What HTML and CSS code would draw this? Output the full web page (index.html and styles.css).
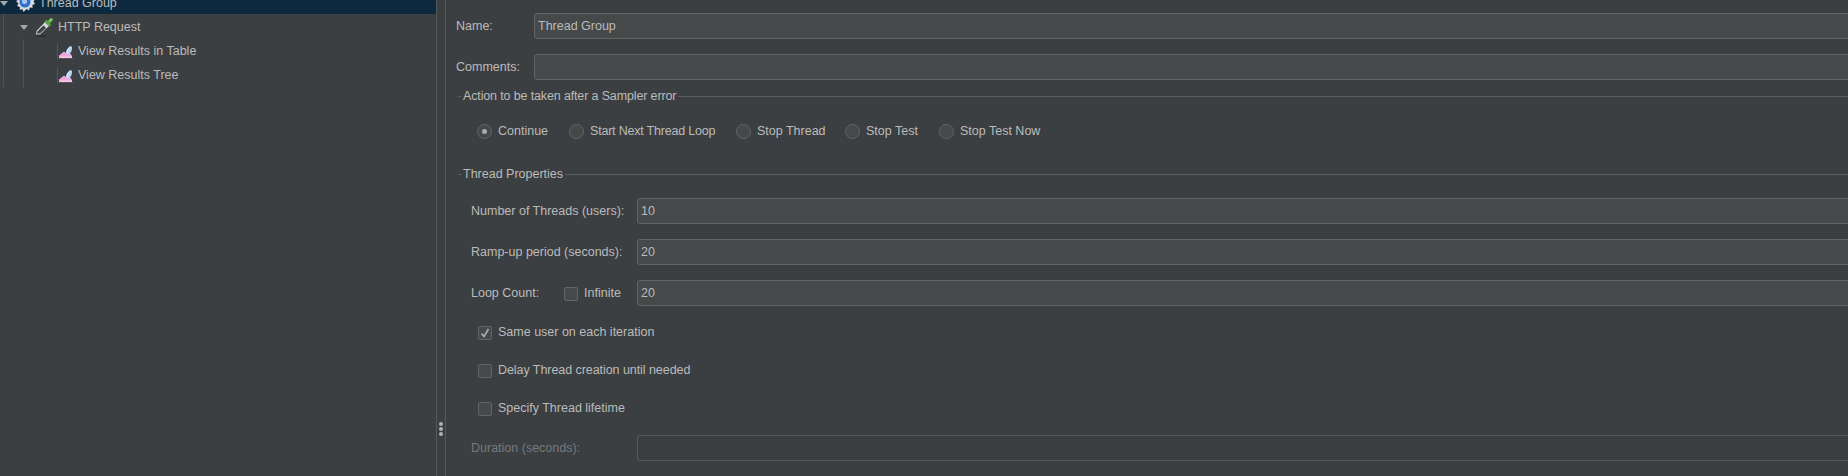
FILE: index.html
```html
<!DOCTYPE html>
<html lang="en">
<head>
<meta charset="utf-8">
<title>Thread Group</title>
<link rel="stylesheet" href="styles.css">
</head>
<body>
<svg class="defs" width="0" height="0">
  <symbol id="listener" viewBox="0 0 18 18">
    <path d="M1.500 1v14.500H17" fill="none" stroke="#5f6163" stroke-width="1" stroke-dasharray="1.500 .7"/>
    <path d="M3 15V12.500L8 8.500l3 2.500 3-1 2 3v2z" fill="#f0a6dc"/>
    <path d="M3 15h13v-1.500H5z" fill="#f7c9ea"/>
    <path d="M10 11c-.5-2.500 1-6 4.500-8 1 0 1.500 1 1.500 2.500 0 2.500-1.500 5-3.500 6z" fill="#b9d3f2"/>
    <path d="M11 10.500c0-2 1-5 3.500-6.500" fill="none" stroke="#e6f0fb" stroke-width="1"/>
  </symbol>
</svg>
<div class="app">
  <aside class="tree">
    <div class="node selected">
      <span class="arrow arrow-root"></span>
      <svg class="gear" viewBox="0 0 20 20" width="20" height="20">
        <path d="M10 0l1.500 2.500 2.500-1.500.8 2.800 2.900-.4-.4 2.900 2.800.8-1.500 2.400 1.400 2.500-2.700 1 .4 2.800-2.900-.2-.8 2.800-2.500-1.500L8.500 20l-1-2.800-2.800.6.2-2.900-2.800-.8 1.300-2.500L1 9l2.500-1.200-.4-2.900 2.900.2.800-2.800 2.300 1.500z" fill="#d9dadb"/>
        <circle cx="10" cy="10" r="5.500" fill="#2f6fd0"/>
        <circle cx="9.500" cy="9.500" r="2.500" fill="#a9c8f0"/>
      </svg>
      <span class="node-text">Thread Group</span>
    </div>
    <div class="node level-1">
      <span class="arrow"></span>
      <svg class="pipette" viewBox="0 0 20 20" width="20" height="20">
        <ellipse cx="7" cy="19" rx="6" ry="1" fill="#2e3032"/>
        <path d="M2 17.500l.5-3.500L11 5l4 4-9 8.500z" fill="#d3d6d8"/>
        <path d="M3 16.500l.5-2 6-6 2.500 2.500-6 5.500z" fill="#3f4345"/>
        <path d="M10.500 4.500l5 5 1.500-1.500-1-1.500 2.500-2.500c1.500-2-.5-4-2.500-2.500L13.500 4 12 3z" fill="#58a83e"/>
        <path d="M15 3.500l2-2 1 1-2 2z" fill="#9ad37e"/>
      </svg>
      <span class="node-text">HTTP Request</span>
    </div>
    <div class="node level-2">
      <svg class="listener" width="18" height="18"><use href="#listener"/></svg>
      <span class="node-text">View Results in Table</span>
    </div>
    <div class="node level-2">
      <svg class="listener" width="18" height="18"><use href="#listener"/></svg>
      <span class="node-text">View Results Tree</span>
    </div>
    <span class="guide guide-root"></span>
    <span class="guide guide-child"></span>
  </aside>
  <div class="splitter">
    <span class="dot"></span><span class="dot"></span><span class="dot"></span>
  </div>
  <main class="form">
    <div class="row head-first">
      <label class="head-label">Name:</label>
      <div class="field">Thread Group</div>
    </div>
    <div class="row row-next">
      <label class="head-label">Comments:</label>
      <div class="field"></div>
    </div>

    <div class="legend legend-action"><span class="legend-dash"></span><span>Action to be taken after a Sampler error</span><span class="legend-line"></span></div>
    <div class="radios">
      <div class="radio-item item-continue"><span class="radio on"></span><span>Continue</span></div>
      <div class="radio-item item-next"><span class="radio"></span><span class="tight">Start Next Thread Loop</span></div>
      <div class="radio-item item-thread"><span class="radio"></span><span>Stop Thread</span></div>
      <div class="radio-item item-test"><span class="radio"></span><span>Stop Test</span></div>
      <div class="radio-item"><span class="radio"></span><span>Stop Test Now</span></div>
    </div>

    <div class="legend legend-props"><span class="legend-dash"></span><span>Thread Properties</span><span class="legend-line"></span></div>
    <div class="props">
      <div class="row">
        <label class="prop-label">Number of Threads (users):</label>
        <div class="field">10</div>
      </div>
      <div class="row row-next">
        <label class="prop-label">Ramp-up period (seconds):</label>
        <div class="field">20</div>
      </div>
      <div class="row row-next">
        <div class="prop-label loop">
          <label class="loop-label">Loop Count:</label>
          <span class="check"></span>
          <span class="infinite">Infinite</span>
        </div>
        <div class="field">20</div>
      </div>
    </div>
    <div class="checks">
      <div class="check-row">
        <span class="check">
          <svg viewBox="0 0 14 14" width="14" height="14"><path d="M3.500 7.500l2.500 3L10.500 3" fill="none" stroke="#a9abac" stroke-width="1.700"/></svg>
        </span>
        <span>Same user on each iteration</span>
      </div>
      <div class="check-row"><span class="check"></span><span class="slim">Delay Thread creation until needed</span></div>
      <div class="check-row"><span class="check"></span><span>Specify Thread lifetime</span></div>
    </div>
    <div class="row row-duration">
      <label class="prop-label disabled">Duration (seconds):</label>
      <div class="field field-disabled"></div>
    </div>
  </main>
</div>
</body>
</html>
```
FILE: styles.css
```css
* { box-sizing: border-box; }
html, body { margin: 0; height: 100%; }
body {
  background: #3c3f41;
  color: #bbbbbb;
  font-family: "Liberation Sans", Arial, sans-serif;
  font-size: 12.5px;
  overflow: hidden;
}
.defs { display: block; height: 0; }
.app { display: flex; height: 476px; overflow: hidden; }

/* Tree */
.tree {
  position: relative;
  flex: 0 0 437px;
  border-right: 1px solid #555759;
  margin-top: -10px;
  height: 486px;
}
.node { display: flex; align-items: center; height: 24px; }
.selected { background: #0d293e; }
.node-text { line-height: 24px; white-space: nowrap; margin-top: 2px; }
.arrow {
  width: 0; height: 0; flex: none;
  border-left: 4.500px solid transparent;
  border-right: 4.500px solid transparent;
  border-top: 5px solid #a5a8aa;
  margin-top: 2px;
}
.arrow-root { margin-right: 7px; }
.gear { flex: none; margin-right: 4px; }
.level-1 { padding-left: 20px; }
.level-1 .arrow { margin-right: 6px; }
.pipette { flex: none; margin-right: 4px; margin-top: 2px; }
.level-2 { padding-left: 56px; }
.listener { flex: none; margin-right: 4px; margin-top: 4px; }
.guide { position: absolute; width: 1px; background: #505355; }
.guide-root { left: 3px; top: 24px; height: 73px; }
.guide-child { left: 23px; top: 49px; height: 48px; }

/* Splitter */
.splitter {
  flex: 0 0 8px;
  display: flex;
  flex-direction: column;
  align-items: center;
  justify-content: flex-end;
  gap: 1px;
  padding-bottom: 40px;
}
.dot { width: 4px; height: 4px; border-radius: 50%; background: #b0b2b3; }

/* Form */
.form {
  flex: 1;
  min-width: 0;
  border-left: 1px solid #555759;
  padding-top: 13px;
  margin-right: -6px;
}
.row { display: flex; align-items: center; height: 26px; }
.row-next { margin-top: 15px; }
.head-label { flex: 0 0 78px; margin-left: 10px; }
.prop-label { flex: 0 0 166px; margin-left: 25px; white-space: nowrap; }
.field {
  flex: 1;
  height: 26px;
  line-height: 24px;
  padding-left: 3px;
  background: #45494a;
  border: 1px solid #646464;
  border-radius: 3px;
}
.field-disabled { background: #3c3f41; border-color: #555759; }
.disabled { color: #77797b; }

.legend { display: flex; align-items: center; height: 14px; white-space: nowrap; }
.legend-dash { width: 3px; height: 1px; background: #5c5f61; margin: 0 2px 0 12px; }
.legend-line { flex: 1; height: 1px; background: #5c5f61; margin-left: 2px; }
.legend-action { margin-top: 9px; letter-spacing: -0.14px; }
.legend-props { margin-top: 23px; }

.radios { display: flex; align-items: center; height: 26px; margin-top: 15px; padding-left: 31px; }
.radio-item { display: flex; align-items: center; gap: 6px; white-space: nowrap; }
.tight { letter-spacing: -0.2px; }
.slim { letter-spacing: -0.06px; }
.item-continue { flex: 0 0 92px; }
.item-next { flex: 0 0 167px; }
.item-thread { flex: 0 0 109px; }
.item-test { flex: 0 0 94px; }
.radio {
  width: 15px; height: 15px; flex: none;
  border-radius: 50%;
  border: 1px solid #646464;
  background: #45494a;
  display: flex; align-items: center; justify-content: center;
}
.radio.on::after { content: ""; width: 5px; height: 5px; border-radius: 50%; background: #a9abac; }

.props { margin-top: 17px; }
.loop { display: flex; align-items: center; }
.loop-label { flex: 0 0 93px; }
.check {
  width: 14px; height: 14px; flex: none;
  border: 1px solid #646464;
  border-radius: 2px;
  background: #45494a;
  display: block;
}
.check svg { display: block; margin: -1px; }
.loop .check { margin-top: 2px; }
.infinite { margin-left: 6px; }

.checks { padding-left: 32px; margin-top: 15px; }
.check-row { display: flex; align-items: flex-start; gap: 6px; height: 38px; white-space: nowrap; }
.check-row .check { margin-top: 5px; }
.check-row span:last-child { line-height: 14px; margin-top: 4px; }
.row-duration { margin-top: 0; }
```
